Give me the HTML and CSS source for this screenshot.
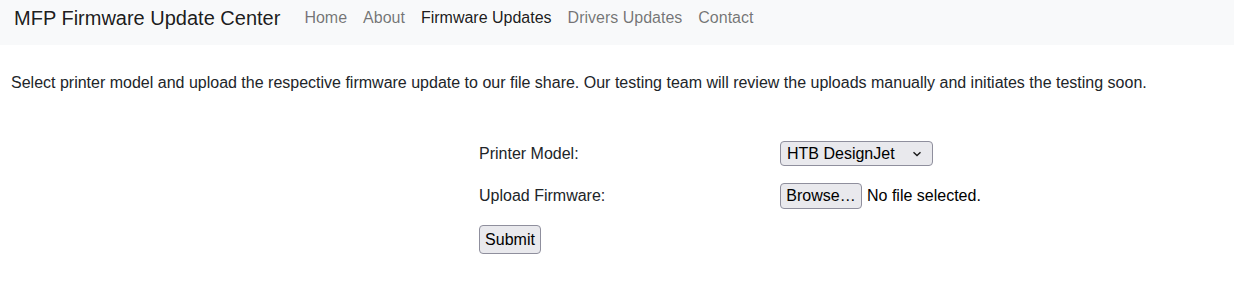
FILE: index.html
```html
<!DOCTYPE html>
<html lang="en">
<head>
    <meta charset="UTF-8">
    <meta name="viewport" content="width=device-width, initial-scale=1.0">
    <title>MFP Firmware Update Center</title>
    <link rel="stylesheet" href="styles.css">
</head>
<body>

    <nav class="navbar">
        <a class="brand" href="#">MFP Firmware Update Center</a>
        <ul class="nav">
            <li><a class="nav-link" href="#">Home</a></li>
            <li><a class="nav-link" href="#">About</a></li>
            <li><a class="nav-link active" href="#">Firmware Updates</a></li>
            <li><a class="nav-link" href="#">Drivers Updates</a></li>
            <li><a class="nav-link" href="#">Contact</a></li>
        </ul>
    </nav>

    <div class="content">
        <p class="intro">Select printer model and upload the respective firmware update to our file share. Our testing team will review the uploads manually and initiates the testing soon.</p>

        <form class="upload-form">
            <label class="field-label" for="model">Printer Model:</label>
            <div class="field">
                <div class="select-box">
                    <span>HTB DesignJet</span>
                    <svg width="10" height="6" viewBox="0 0 10 6"><path d="M1.5 1.2 L5 4.6 L8.5 1.2" fill="none" stroke="#1b1b1b" stroke-width="1.4"/></svg>
                </div>
            </div>

            <label class="field-label" for="firmware">Upload Firmware:</label>
            <div class="field">
                <button type="button" class="browse">Browse…</button>
                <span class="file-name">No file selected.</span>
            </div>

            <div class="actions">
                <button type="submit" class="submit">Submit</button>
            </div>
        </form>
    </div>

</body>
</html>
```

FILE: styles.css
```css
body {
    margin: 0;
    font-family: 'Liberation Sans', Arial, sans-serif;
    font-size: 16px;
    line-height: 24px;
    color: #212529;
    background: #fff;
}

/* top bar */
.navbar {
    display: flex;
    align-items: flex-start;
    height: 45px;
    padding: 0 14px;
    background: #f8f9fa;
    box-sizing: border-box;
}

.brand {
    font-size: 20px;
    line-height: 30px;
    padding-top: 3px;
    margin-right: 16px;
    color: rgba(0, 0, 0, 0.9);
    text-decoration: none;
}

.nav {
    display: flex;
    list-style: none;
    margin: 0;
    padding: 6px 0 0 0;
}

.nav-link {
    display: block;
    padding: 0 8px;
    color: rgba(0, 0, 0, 0.55);
    text-decoration: none;
}

.nav-link.active {
    color: rgba(0, 0, 0, 0.9);
}

/* page body */
.content {
    padding: 0 11px;
}

.intro {
    margin: 26px 0 0 0;
}

.upload-form {
    display: grid;
    grid-template-columns: 301px auto;
    align-items: center;
    row-gap: 17px;
    margin: 46px 0 0 468px;
}

.field {
    display: flex;
    align-items: center;
}

.select-box {
    display: flex;
    align-items: center;
    justify-content: space-between;
    width: 153px;
    height: 25px;
    padding: 0 10px 0 6px;
    box-sizing: border-box;
    background: #e9e9ed;
    border: 1px solid #8f8f9d;
    border-radius: 4px;
    color: #000;
    line-height: 20px;
}

.browse,
.submit {
    font-family: inherit;
    font-size: 16px;
    color: #000;
    background: #e9e9ed;
    border: 1px solid #8f8f9d;
    border-radius: 4px;
}

.browse {
    width: 82px;
    height: 26px;
    padding: 0;
}

.file-name {
    margin-left: 5px;
    color: #000;
}

.actions {
    grid-column: 1 / 3;
    margin-top: -1px;
}

.submit {
    width: 62px;
    height: 29px;
    padding: 0;
}
```
